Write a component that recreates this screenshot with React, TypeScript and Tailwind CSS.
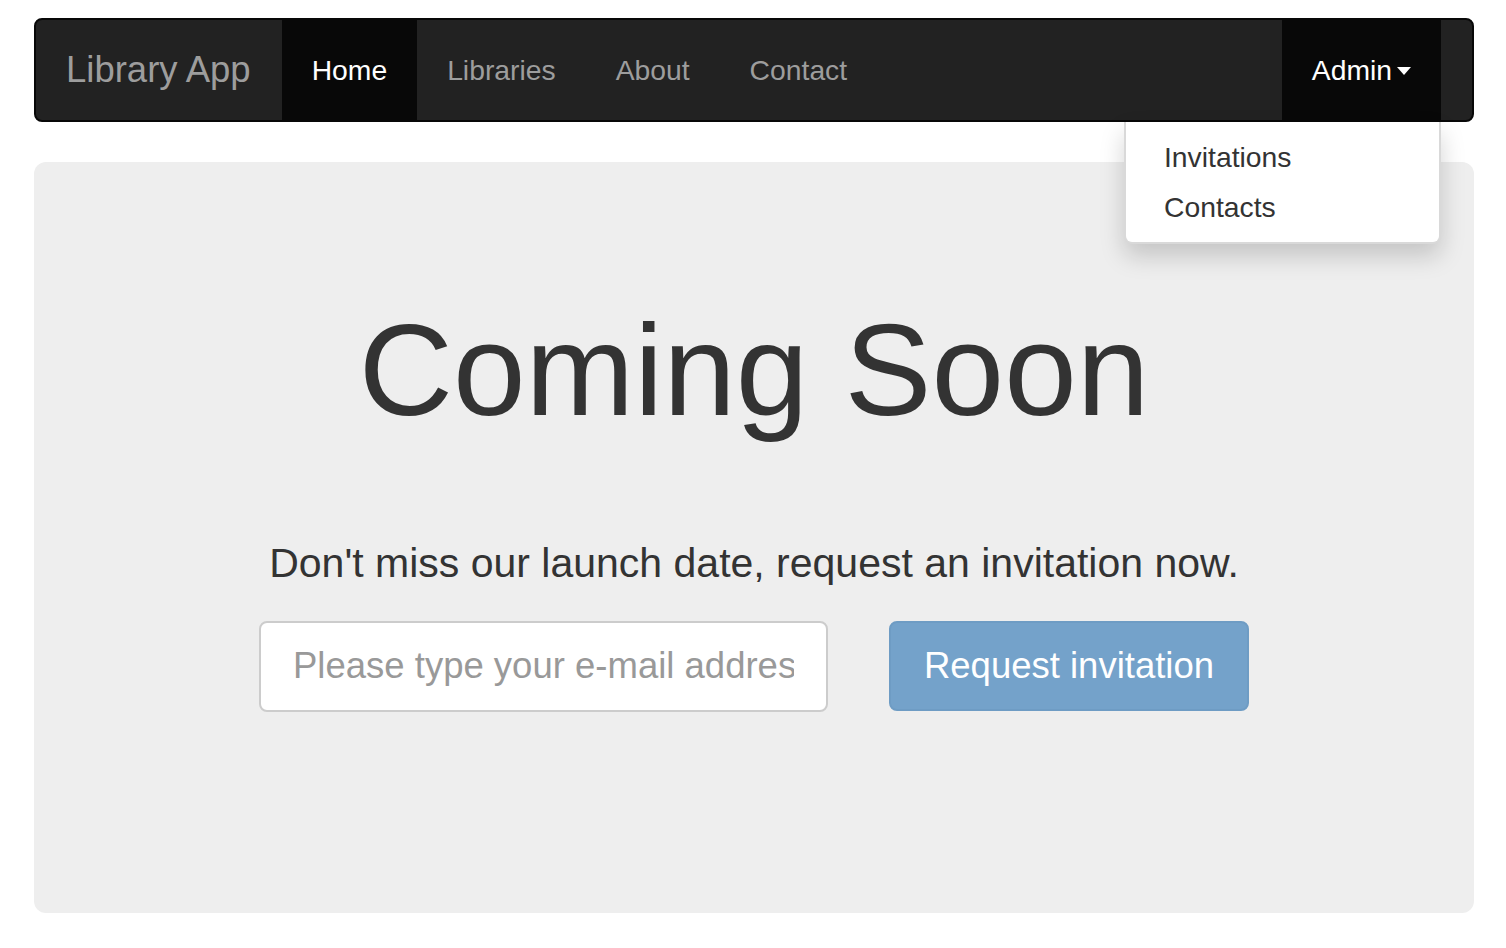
import React from "react";

const navLinks = [
  { label: "Home", active: true },
  { label: "Libraries", active: false },
  { label: "About", active: false },
  { label: "Contact", active: false },
];

const App: React.FC = () => {
  return (
    <div
      className="min-h-[948px] bg-white pl-[34px] pr-[32px] pt-[18px] text-[#333]"
      style={{ fontFamily: '"Liberation Sans", Arial, sans-serif' }}
    >
      {/* navbar */}
      <nav className="relative flex h-[104px] items-stretch rounded-[8px] border-2 border-[#080808] bg-[#222]">
        <a className="flex items-center pl-[30px] pr-[31px] text-[36.5px] text-[#9d9d9d]">Library App</a>
        <ul className="flex items-stretch">
          {navLinks.map((link) => (
            <li
              key={link.label}
              className={`flex items-center px-[30px] text-[28.3px] ${
                link.active ? "bg-[#080808] text-white" : "text-[#9d9d9d]"
              }`}
            >
              {link.label}
            </li>
          ))}
        </ul>
        <div className="ml-auto mr-[31px] flex items-stretch">
          <div className="relative flex items-center bg-[#080808] px-[30px] text-[28.3px] text-white">
            Admin
            <span className="ml-[5px] mt-[2px] inline-block h-0 w-0 border-x-[7px] border-t-[8px] border-x-transparent border-t-white" />
            <ul className="absolute right-0 top-[102px] z-10 w-[317px] rounded-b-[8px] border-2 border-t-0 border-black/15 bg-white py-[10px] text-[28.3px] text-[#333] shadow-[0_12px_24px_rgba(0,0,0,0.175)]">
              <li className="px-[38px] py-[5px] leading-[40px]">Invitations</li>
              <li className="px-[38px] py-[5px] leading-[40px]">Contacts</li>
            </ul>
          </div>
        </div>
      </nav>

      {/* jumbotron */}
      <section className="mt-[40px] flex h-[751px] flex-col items-center rounded-[12px] bg-[#eee] pt-[143px]">
        <h1 className="text-[130.5px] leading-none text-[#333]">Coming Soon</h1>
        <p className="mt-[107px] text-[41px] leading-none text-[#333]">
          Don't miss our launch date, request an invitation now.
        </p>
        <form className="mt-[37px] flex items-center gap-[61px]" onSubmit={(e) => e.preventDefault()}>
          <input
            type="email"
            placeholder="Please type your e-mail address"
            className="h-[91px] w-[569px] rounded-[8px] border-2 border-[#ccc] bg-white px-[32px] text-[36.5px] text-[#555] placeholder:text-[#999] outline-none"
          />
          <button
            type="submit"
            className="h-[90px] w-[360px] rounded-[8px] border-2 border-[#6e9cc4] bg-[#74a2ca] text-[36.5px] text-white"
          >
            Request invitation
          </button>
        </form>
      </section>
    </div>
  );
};

export default App;
